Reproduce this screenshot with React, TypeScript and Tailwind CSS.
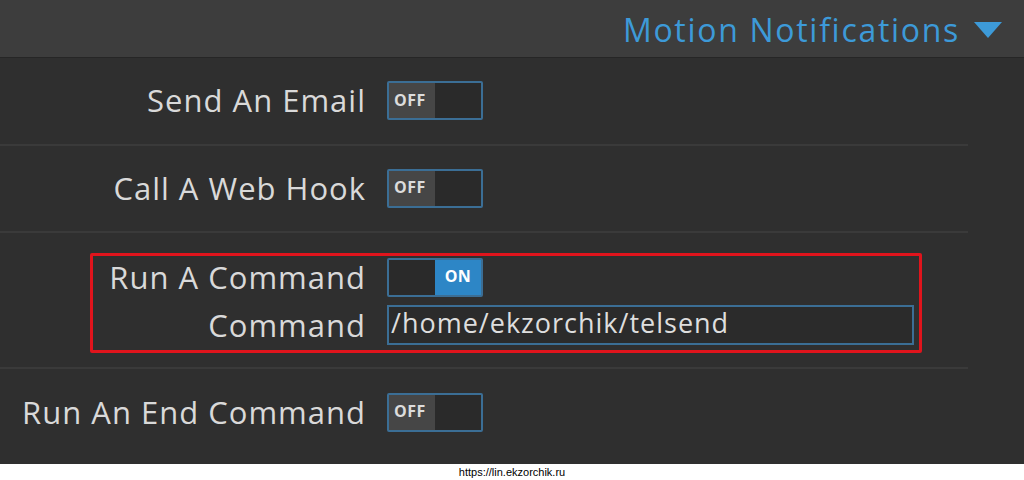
const Toggle = ({ on }: { on: boolean }) => {
  return (
    <div className="flex h-[39px] w-[96px] overflow-hidden rounded-[2px] border-2 border-[#3b6e95] text-[16px] font-bold tracking-[0.5px]">
      {on ? (
        <>
          <div className="w-[46px] bg-[#2a2a2a]" />
          <div className="flex flex-1 items-center justify-center bg-[#2d86c6] pb-[2px] text-white">ON</div>
        </>
      ) : (
        <>
          <div className="flex w-[46px] items-center bg-[#464646] pb-[2px] pl-[5px] text-[#dcdcdc]">OFF</div>
          <div className="flex-1 bg-[#2a2a2a]" />
        </>
      )}
    </div>
  )
}

const Row = ({ label, on }: { label: string; on: boolean }) => {
  return (
    <div className="grid grid-cols-[366px_1fr] items-center gap-[21px]">
      <div className="text-right">{label}</div>
      <Toggle on={on} />
    </div>
  )
}

const App = () => {
  return (
    <div className="flex h-[480px] w-[1024px] flex-col bg-white" style={{ fontFamily: '"Open Sans", sans-serif' }}>
      <div className="flex h-[58px] items-center justify-end gap-[14px] border-b border-[#262626] bg-[#3d3d3d] pt-[3px] pr-[22px] text-[32px] tracking-[1.7px] text-[#3d9ad8]">
        <span>Motion Notifications</span>
        <svg width="28" height="20" viewBox="0 0 28 20">
          <polygon points="0,2 28,2 14,18" fill="#3d9ad8" />
        </svg>
      </div>

      <div className="flex h-[408px] bg-[#2f2f2f] text-[31px] tracking-[1px] text-[#d9d9d9]">
        <div className="flex w-[968px] flex-col">
          <div className="flex h-[88px] items-center border-b-2 border-[#3a3a3a]">
            <Row label="Send An Email" on={false} />
          </div>
          <div className="flex h-[87px] items-center border-b-2 border-[#3a3a3a]">
            <Row label="Call A Web Hook" on={false} />
          </div>
          <div className="border-b-2 border-[#3a3a3a] pt-[20px] pb-[14px]">
            <div className="ml-[90px] mr-[46px] grid grid-cols-[273px_1fr] items-center gap-x-[21px] gap-y-[8px] rounded-[2px] border-[3px] border-[#e0141c] pt-[2px] pr-[5px] pb-[5px]">
              <div className="text-right leading-[39px]">Run A Command</div>
              <Toggle on={true} />
              <div className="text-right leading-[40px]">Command</div>
              <div className="flex h-[40px] items-center border-2 border-[#3b6e95] bg-[#2b2b2b] px-[2px] pb-[2px] text-[27px] tracking-[1px] text-[#dedede]">
                /home/ekzorchik/telsend
              </div>
            </div>
          </div>
          <div className="flex flex-1 items-center pb-[8px]">
            <Row label="Run An End Command" on={false} />
          </div>
        </div>
      </div>

      <div className="flex flex-1 items-center justify-center text-[11px] text-black" style={{ fontFamily: '"Liberation Sans", sans-serif' }}>
        https://lin.ekzorchik.ru
      </div>
    </div>
  )
}

export default App
